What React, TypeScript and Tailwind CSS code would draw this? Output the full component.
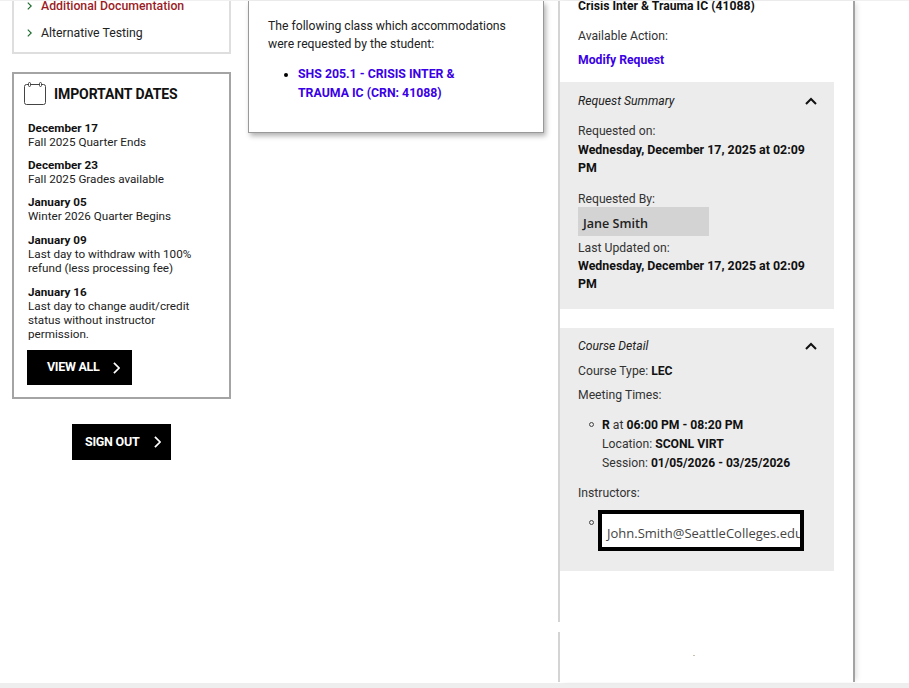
import React from "react";

const font = { fontFamily: "Roboto, 'Liberation Sans', sans-serif" };

function Chevron({ className = "", color = "#fff", w = 2 }: { className?: string; color?: string; w?: number }) {
  return (
    <svg className={className} viewBox="0 0 8 14" fill="none" stroke={color} strokeWidth={w}>
      <path d="M1 1l6 6-6 6" />
    </svg>
  );
}

function ChevronUp() {
  return (
    <svg className="w-[12px] h-[8px] -mr-[3px]" viewBox="0 0 12 8" fill="none" stroke="#111" strokeWidth={2}>
      <path d="M1 7l5-5 5 5" />
    </svg>
  );
}

function Ring({ className = "" }: { className?: string }) {
  return <span className={"w-[5px] h-[5px] shrink-0 rounded-full border border-[#444] " + className} />;
}

function DateItem({ d, t, className = "" }: { d: string; t: React.ReactNode; className?: string }) {
  return (
    <div className={"text-[11.7px] leading-[14px] text-[#222] " + className}>
      <div className="font-bold text-[#111]">{d}</div>
      <div>{t}</div>
    </div>
  );
}

export default function App() {
  return (
    <div className="w-[909px] h-[688px] overflow-hidden bg-white flex flex-col" style={font}>
      <div className="h-[1px] bg-[#f0f0f0] shrink-0" />
      <div className="flex flex-1 min-h-0">
        <aside className="w-[219px] ml-[12px] shrink-0 flex flex-col">
          <div className="h-[53px] overflow-hidden border-x-2 border-b-2 border-[#dedede] flex flex-col justify-end pl-[13px] pb-[11px] text-[12.3px]">
            <div className="flex items-center gap-[9px] h-[16px] mb-[11px] font-medium text-[#9b1c1f]">
              <Chevron className="w-[5px] h-[8px]" color="#1b6b2c" />
              <span>Additional Documentation</span>
            </div>
            <div className="flex items-center gap-[9px] h-[16px] text-[#222]">
              <Chevron className="w-[5px] h-[8px]" color="#1b6b2c" />
              <span>Alternative Testing</span>
            </div>
          </div>

          <div className="mt-[18px] h-[327px] border-2 border-[#a4a4a4] px-[14px] pt-[8px]">
            <div className="flex items-center gap-[7px] -ml-[4px] h-[24px]">
              <svg className="w-[23px] h-[23px] -mt-[2px]" viewBox="0 0 23 23" fill="none" stroke="#444" strokeWidth={1}>
                <rect x="0.5" y="2.5" width="21" height="20" rx="2" />
                <rect x="4.5" y="0.5" width="2" height="4" rx="1" fill="#fff" />
                <rect x="15.5" y="0.5" width="2" height="4" rx="1" fill="#fff" />
              </svg>
              <span className="text-[14px] font-bold text-[#111] tracking-[-0.1px]">IMPORTANT DATES</span>
            </div>
            <DateItem className="mt-[15px]" d="December 17" t="Fall 2025 Quarter Ends" />
            <DateItem className="mt-[9px]" d="December 23" t="Fall 2025 Grades available" />
            <DateItem className="mt-[9px]" d="January 05" t="Winter 2026 Quarter Begins" />
            <DateItem className="mt-[10px]" d="January 09" t="Last day to withdraw with 100% refund (less processing fee)" />
            <DateItem className="mt-[10px]" d="January 16" t="Last day to change audit/credit status without instructor permission." />
            <div className="mt-[9px] -ml-[1px] w-[105px] h-[35px] bg-black flex items-center pl-[20px] gap-[14px] text-white text-[12.5px] font-bold tracking-[-0.3px]">
              <span>VIEW ALL</span>
              <Chevron className="w-[7px] h-[12px]" />
            </div>
          </div>

          <div className="mt-[25px] ml-[60px] w-[99px] h-[36px] bg-black flex items-center pl-[13px] gap-[15px] text-white text-[12.5px] font-bold tracking-[-0.25px]">
            <span>SIGN OUT</span>
            <Chevron className="w-[7px] h-[12px]" />
          </div>
        </aside>

        <main className="w-[296px] ml-[17px] shrink-0 h-[132px] bg-white border-x border-b border-[#999] shadow-[2px_3px_5px_rgba(0,0,0,0.3)] px-[19px] pt-[16px] text-[12.2px] text-[#222]">
          <p className="leading-[18px]">The following class which accommodations were requested by the student:</p>
          <ul className="list-disc mt-[12px] ml-[30px] pr-[50px] leading-[19px] font-bold text-[#3a00e6] text-[12.3px]">
            <li className="marker:text-black">SHS 205.1 - CRISIS INTER &amp; TRAUMA IC (CRN: 41088)</li>
          </ul>
        </main>

        <section className="relative w-[297px] ml-[14px] shrink-0 h-[681px] border-l-2 border-l-[#d4d4d4] border-r-2 border-r-[#a3a3a3] shadow-[4px_0_5px_-2px_rgba(0,0,0,0.12)] flex flex-col text-[12.2px] text-[#333]">
          <span className="absolute -left-[2px] top-[621px] w-[2px] h-[10px] bg-white" />
          <span className="absolute left-[133px] top-[654px] w-[2px] h-[1px] bg-[#cbbfb2]" />
          <div className="pl-[18px] h-[81px] shrink-0 overflow-hidden">
            <div className="font-bold text-[#111] leading-[16px] -mt-[3px]">Crisis Inter &amp; Trauma IC (41088)</div>
            <div className="mt-[14px] leading-[16px]">Available Action:</div>
            <div className="mt-[8px] leading-[16px] font-bold text-[#3a00e6]">Modify Request</div>
          </div>
          <div className="w-[274px] h-[227px] shrink-0 bg-[#ececec] pl-[18px] pr-[20px] pt-[11px]">
            <div className="flex items-center justify-between h-[16px]">
              <i className="text-[#222]">Request Summary</i>
              <ChevronUp />
            </div>
            <div className="mt-[13px] mb-[1px] leading-[18px]">Requested on:</div>
            <div className="font-bold text-[#111] leading-[18px] text-[12.4px]">Wednesday, December 17, 2025 at 02:09 PM</div>
            <div className="mt-[14px] leading-[16px]">Requested By:</div>
            <div className="w-[131px] h-[29px] bg-[#d3d3d3] pl-[5px] pt-[5px] flex items-center text-[#222] font-semibold text-[12.6px]" style={{ fontFamily: "'Open Sans', sans-serif" }}>Jane Smith</div>
            <div className="mt-[3px] leading-[18px]">Last Updated on:</div>
            <div className="font-bold text-[#111] leading-[18px] text-[12.4px]">Wednesday, December 17, 2025 at 02:09 PM</div>
          </div>
          <div className="w-[274px] h-[243px] mt-[19px] shrink-0 bg-[#ececec] pl-[18px] pr-[20px] pt-[10px]">
            <div className="flex items-center justify-between h-[16px]">
              <i className="text-[#222]">Course Detail</i>
              <ChevronUp />
            </div>
            <div className="mt-[9px] leading-[16px]">Course Type: <b className="text-[#111]">LEC</b></div>
            <div className="mt-[8px] leading-[16px]">Meeting Times:</div>
            <ul className="mt-[13px] ml-[11px] leading-[19px]">
              <li className="flex items-start gap-[8px]">
                <Ring className="mt-[6px]" />
                <div>
                  <b className="text-[#111]">R</b> at <b className="text-[#111]">06:00 PM - 08:20 PM</b>
                  <br />Location: <b className="text-[#111]">SCONL VIRT</b>
                  <br />Session: <b className="text-[#111] text-[12.05px]">01/05/2026 - 03/25/2026</b>
                </div>
              </li>
            </ul>
            <div className="mt-[12px] leading-[16px]">Instructors:</div>
            <ul className="mt-[9px] ml-[11px]">
              <li className="flex items-start gap-[4px]">
                <Ring className="mt-[10px]" />
                <div className="w-[206px] h-[41px] shrink-0 border-[4px] border-black bg-white overflow-hidden pl-[5px] pt-[7px] flex items-center whitespace-nowrap text-[13px] text-[#444]" style={{ fontFamily: "'Open Sans', sans-serif" }}>John.Smith@SeattleColleges.edu</div>
              </li>
            </ul>
          </div>
        </section>
      </div>
      <div className="h-[5px] bg-[#eeeeee] shrink-0" />
    </div>
  );
}
